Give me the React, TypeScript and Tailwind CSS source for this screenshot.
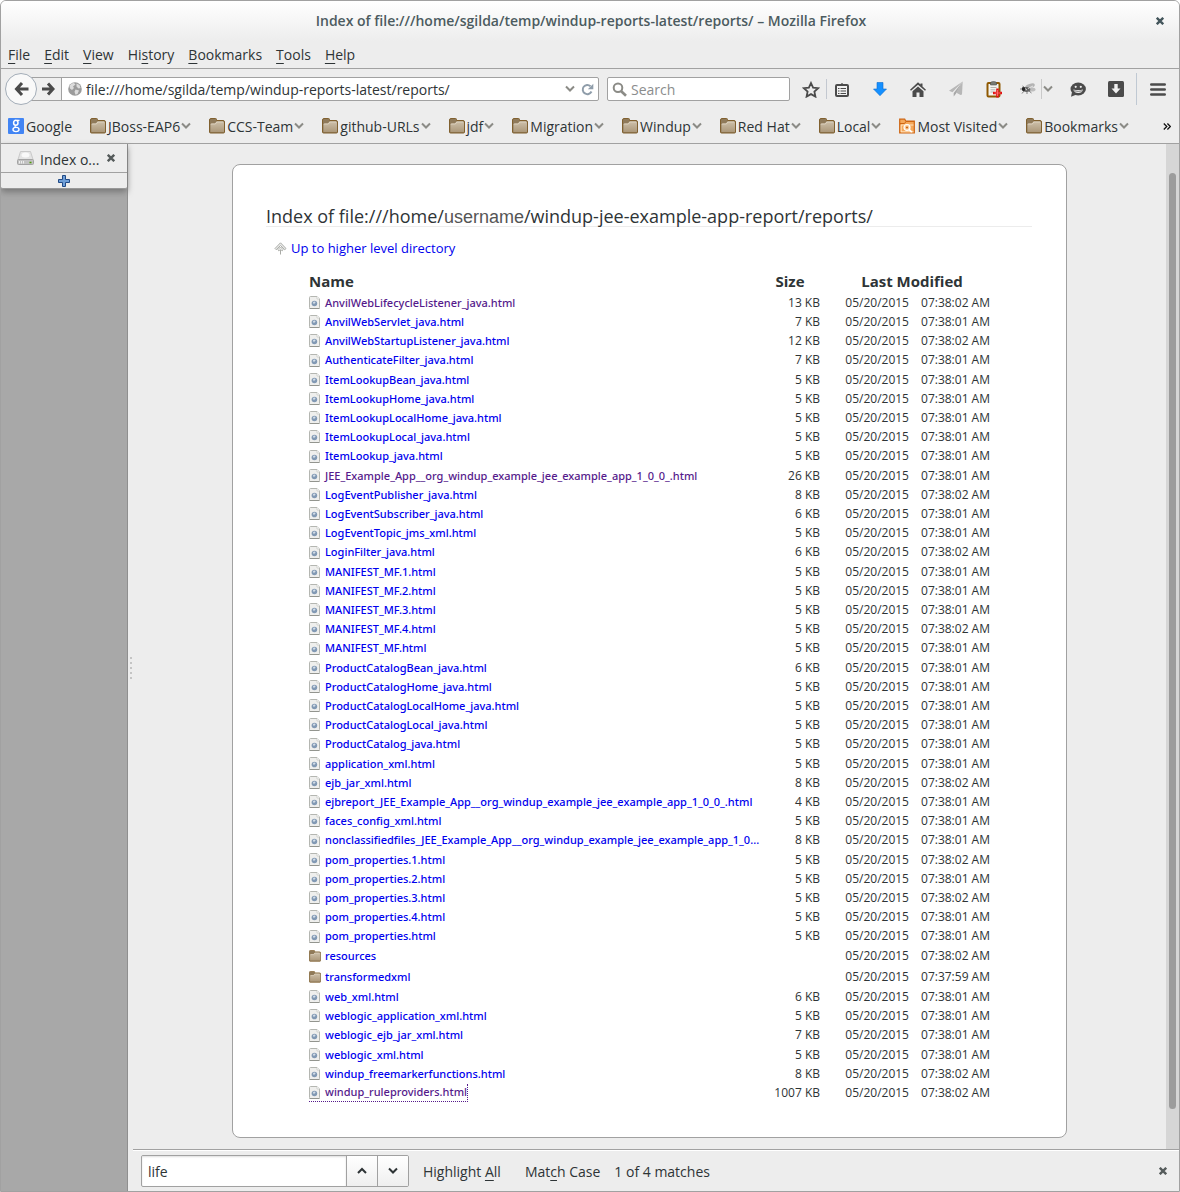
import type { ReactNode } from "react";

type Entry = { name: string; size?: string; time: string; visited?: boolean; focused?: boolean };

const row = (name: string, size: string, sec: string, extra: Partial<Entry> = {}): Entry => ({
  name,
  size: size ? `${size} KB` : undefined,
  time: `07:38:${sec} AM`,
  ...extra,
});

const entries: Entry[] = [
  row("AnvilWebLifecycleListener_java.html", "13", "02", { visited: true }),
  row("AnvilWebServlet_java.html", "7", "01"),
  row("AnvilWebStartupListener_java.html", "12", "02"),
  row("AuthenticateFilter_java.html", "7", "01"),
  row("ItemLookupBean_java.html", "5", "01"),
  row("ItemLookupHome_java.html", "5", "01"),
  row("ItemLookupLocalHome_java.html", "5", "01"),
  row("ItemLookupLocal_java.html", "5", "01"),
  row("ItemLookup_java.html", "5", "01"),
  row("JEE_Example_App__org_windup_example_jee_example_app_1_0_0_.html", "26", "01", { visited: true }),
  row("LogEventPublisher_java.html", "8", "02"),
  row("LogEventSubscriber_java.html", "6", "01"),
  row("LogEventTopic_jms_xml.html", "5", "01"),
  row("LoginFilter_java.html", "6", "02"),
  row("MANIFEST_MF.1.html", "5", "01"),
  row("MANIFEST_MF.2.html", "5", "01"),
  row("MANIFEST_MF.3.html", "5", "01"),
  row("MANIFEST_MF.4.html", "5", "02"),
  row("MANIFEST_MF.html", "5", "01"),
  row("ProductCatalogBean_java.html", "6", "01"),
  row("ProductCatalogHome_java.html", "5", "01"),
  row("ProductCatalogLocalHome_java.html", "5", "01"),
  row("ProductCatalogLocal_java.html", "5", "01"),
  row("ProductCatalog_java.html", "5", "01"),
  row("application_xml.html", "5", "01"),
  row("ejb_jar_xml.html", "8", "02"),
  row("ejbreport_JEE_Example_App__org_windup_example_jee_example_app_1_0_0_.html", "4", "01"),
  row("faces_config_xml.html", "5", "01"),
  row("nonclassifiedfiles_JEE_Example_App__org_windup_example_jee_example_app_1_0...", "8", "01"),
  row("pom_properties.1.html", "5", "02"),
  row("pom_properties.2.html", "5", "01"),
  row("pom_properties.3.html", "5", "02"),
  row("pom_properties.4.html", "5", "01"),
  row("pom_properties.html", "5", "01"),
  row("resources", "", "02"),
  row("transformedxml", "", "", { time: "07:37:59 AM" }),
  row("web_xml.html", "6", "01"),
  row("weblogic_application_xml.html", "5", "01"),
  row("weblogic_ejb_jar_xml.html", "7", "01"),
  row("weblogic_xml.html", "5", "01"),
  row("windup_freemarkerfunctions.html", "8", "02"),
  row("windup_ruleproviders.html", "1007", "02", { visited: true, focused: true }),
];

const menus: [string, string, string][] = [
  ["", "F", "ile"],
  ["", "E", "dit"],
  ["", "V", "iew"],
  ["Hi", "s", "tory"],
  ["", "B", "ookmarks"],
  ["", "T", "ools"],
  ["", "H", "elp"],
];

const bookmarks = ["JBoss-EAP6", "CCS-Team", "github-URLs", "jdf", "Migration", "Windup", "Red Hat", "Local", "Most Visited", "Bookmarks"];

const Key = ({ children }: { children: ReactNode }) => <span className="underline underline-offset-3">{children}</span>;

const Chevron = ({ up = false, dark = false }: { up?: boolean; dark?: boolean }) => (
  <svg width="10" height="8" viewBox="0 0 10 8" className="shrink-0" fill="none" stroke={dark ? "#2e3436" : "#8b8b86"} strokeWidth="2">
    <path d={up ? "M1 6l4-4 4 4" : "M1 1.5l4 4 4-4"} />
  </svg>
);

const Cross = ({ color = "#555b5b" }: { color?: string }) => (
  <svg width="8" height="8" viewBox="0 0 8 8" stroke={color} strokeWidth="2.4">
    <path d="M.8.8l6.4 6.4M7.2.8L.8 7.2" />
  </svg>
);

const Folder = ({ size = 16 }: { size?: number }) => (
  <svg width={size} height={size} viewBox="0 0 16 16" className="shrink-0">
    <defs>
      <linearGradient id="folder" x2="0" y2="1">
        <stop offset="0" stopColor="#cdc0aa" />
        <stop offset="1" stopColor="#ac987a" />
      </linearGradient>
    </defs>
    <path d="M.5 14V2q0-1.5 1.500-1.500h4.500q1 0 1 1v1H14q1.500 0 1.500 1.500v10q0 1-1 1h-13q-1 0-1-1z" fill="#8f7a5a" stroke="#80602f" />
    <path d="M1.500 14V6.500q0-1 1-1H6l1.500-2H14q1 0 1 1V14z" fill="url(#folder)" />
    <path d="M2 6.500q0-.5.5-.5h3.800l1.500-2H14" fill="none" stroke="#e2d8c7" strokeWidth=".8" />
  </svg>
);

const SearchFolder = () => (
  <svg width="16" height="16" viewBox="0 0 16 16" className="shrink-0">
    <path d="M.7 15V1.200h5l1 1.800h8.600v12z" fill="#f5a85a" stroke="#ce6512" strokeWidth="1.200" />
    <path d="M1 5.500h4.500l1.500-2h8" fill="none" stroke="#ce6512" />
    <path d="M2 7h12.500M2 13.800h12.500M2.200 7v7" stroke="#ffe2bd" fill="none" />
    <circle cx="8" cy="9.500" r="3" fill="#f9cf9f" stroke="#fff" strokeWidth="1.200" />
    <circle cx="8" cy="9.500" r="1.100" fill="#ce6512" />
    <path d="M10.200 11.700l2.600 2.500" stroke="#fff" strokeWidth="1.600" />
  </svg>
);

const FileIcon = () => (
  <svg width="12" height="13" viewBox="0 0 12 13" className="shrink-0">
    <path d="M.5 1.500q0-1 1-1H8L10.500 3v8.500q0 1-1 1h-8q-1 0-1-1z" fill="#efefed" stroke="#b4b6b1" />
    <path d="M.5 12.500h10" stroke="#93958f" />
    <path d="M8 .5V3h2.500" fill="#fff" stroke="#c4c6c1" strokeWidth=".7" />
    <circle cx="5.400" cy="7.500" r="2.800" fill="#8299b4" />
    <path d="M4 6q1.500-1 2.600 0l-.8 1.600-1.500.2z" fill="#d5dfe9" />
  </svg>
);

const ToolButton = ({ label, children }: { label: string; children: ReactNode }) => (
  <button type="button" aria-label={label} className="flex h-6 w-[18px] shrink-0 items-center justify-center">
    {children}
  </button>
);

const BackArrow = () => (
  <svg width="15" height="16" viewBox="0 0 15 16" fill="none" stroke="#4a4a4a" strokeWidth="3">
    <path d="M8 2L2.500 8 8 14M3 8h11.500" />
  </svg>
);

const ForwardArrow = () => (
  <svg width="13" height="14" viewBox="0 0 13 14" fill="none" stroke="#4a4a4a" strokeWidth="3">
    <path d="M6 1.500L11 7l-5 5.500M10.500 7H0" />
  </svg>
);

function TitleBar() {
  return (
    <header className="grid h-10 shrink-0 grid-cols-[40px_1fr_38px] items-center bg-linear-to-b from-white to-[#ededed]">
      <h1 className="col-start-2 text-center text-sm font-semibold text-[#4c5b60]">
        Index of file:///home/sgilda/temp/windup-reports-latest/reports/ – Mozilla Firefox
      </h1>
      <button type="button" aria-label="Close window" className="flex h-6 items-center justify-center">
        <Cross color="#44565c" />
      </button>
    </header>
  );
}

function Toolbar() {
  return (
    <div className="flex h-10 shrink-0 items-center pr-3 pl-1">
      <button type="button" aria-label="Back" className="z-10 flex size-8 shrink-0 items-center justify-center rounded-full border border-[#a3adb8] bg-[#f9f9f9]">
        <BackArrow />
      </button>
      <div className="-ml-2 flex h-6 flex-1 items-center rounded-r-xs border border-[#a1a1a1] bg-white">
        <button type="button" aria-label="Forward" className="flex h-full w-8 shrink-0 items-center justify-center border-r border-[#a1a1a1] bg-[#efefef] pl-1.5">
          <ForwardArrow />
        </button>
        <svg width="14" height="14" viewBox="0 0 14 14" className="ml-1.5 shrink-0">
          <circle cx="7" cy="7" r="6.800" fill="#9b9b9b" />
          <path d="M1.500 4Q3 1 6 1l1.500 1.500L5 4.500 6 6 4 8 2 6.500zM8.500 1.500l3 1.500 1 3-2 .5-2-2zM7.500 7.500l3.500 1-1.500 3.500-2 .8-1-3z" fill="#dcdcdc" />
        </svg>
        <input
          aria-label="Address"
          defaultValue="file:///home/sgilda/temp/windup-reports-latest/reports/"
          className="ml-1 h-full min-w-0 flex-1 bg-transparent pt-px text-sm text-[#2e3436] outline-none"
        />
        <button type="button" aria-label="Show history" className="px-1.5">
          <Chevron />
        </button>
        <button type="button" aria-label="Reload" className="mr-1">
          <svg width="13" height="13" viewBox="0 0 13 13" fill="none" stroke="#8f9daa" strokeWidth="2">
            <path d="M10.500 8.500A4.600 4.600 0 1 1 9.500 3.200" />
            <path d="M12.300.8v5.400H6.800z" fill="#8f9daa" stroke="none" />
          </svg>
        </button>
      </div>
      <div className="ml-2 flex h-6 w-[183px] shrink-0 items-center gap-1 rounded-xs border border-[#a1a1a1] bg-white pl-1">
        <svg width="15" height="15" viewBox="0 0 15 15" fill="none" stroke="#8b8b86" strokeWidth="2" className="shrink-0">
          <circle cx="6" cy="5.800" r="4.300" />
          <path d="M9 9l5 4.800" strokeWidth="2.600" />
        </svg>
        <input aria-label="Search" placeholder="Search" className="min-w-0 flex-1 bg-transparent pt-px text-sm outline-none placeholder:text-[#8b8d8d]" />
      </div>
      <div className="ml-3 flex items-center gap-5">
        <div className="flex items-center">
          <ToolButton label="Bookmark this page">
            <svg width="18" height="17" viewBox="0 0 18 17" fill="none" stroke="#4b4b4b" strokeWidth="1.800">
              <path d="M9 2l2.100 4.600 5 .6-3.700 3.400 1 5L9 13.100l-4.400 2.500 1-5L1.900 7.200l5-.6z" />
            </svg>
          </ToolButton>
          <span className="mx-1.5 h-5 w-px bg-[#c3c8d0]" />
          <ToolButton label="Show bookmarks">
            <svg width="14" height="15" viewBox="0 0 14 15">
              <rect x="1" y="3" width="12" height="11" rx="1" fill="#f1f1f1" stroke="#4b4b4b" strokeWidth="2" />
              <path d="M4 4V2h2q1-2 2 0h2v2z" fill="#4b4b4b" />
              <path d="M3 6.500h1.500M5.500 6.500H11M3 9h1.500M5.500 9H11M3 11.500h1.500M5.500 11.500H11" stroke="#4b4b4b" strokeWidth="1.200" />
            </svg>
          </ToolButton>
        </div>
        <ToolButton label="Downloads">
          <svg width="14" height="14" viewBox="0 0 14 14">
            <path d="M4 .5h6V7h3.500L7 13.700.5 7H4z" fill="#1590ff" stroke="#0a6dd0" strokeWidth=".6" />
          </svg>
        </ToolButton>
        <ToolButton label="Home">
          <svg width="16" height="15" viewBox="0 0 16 15" fill="#4b4b4b">
            <path d="M8 .3l2.500 2.300V1.500h2v3L16 7.800l-1 1L8 2.700 1 8.800l-1-1z" />
            <path d="M2.500 9.200L8 4.400l5.500 4.800V15H9.500v-4.500h-3V15h-4z" />
          </svg>
        </ToolButton>
        <ToolButton label="Share this page">
          <svg width="14" height="16" viewBox="0 0 14 16" fill="#b7b7b7">
            <path d="M13.700.5L0 9.800l3.500 1.500z" />
            <path d="M13.700.5L4.700 12v3.500l2.200-2.800z" fill="#a8a8a8" />
            <path d="M13.700.5L7 11.600l4.500 2.400 1.500-.5z" />
          </svg>
        </ToolButton>
        <ToolButton label="Add from clipboard">
          <svg width="16" height="17" viewBox="0 0 16 17">
            <rect x="1.500" y="2" width="12" height="13.500" rx="1" fill="#f4f4f0" stroke="#8f5902" strokeWidth="2" />
            <path d="M4.500 4V2q0-1.500 3-1.500t3 1.500v2z" fill="#777b75" stroke="#4b4d4a" strokeWidth=".6" />
            <path d="M4.500 6.500h6M4.500 8.800h5M4.500 11h3" stroke="#b5b7b2" />
            <path d="M11.500 7.500v9M7 12h9" stroke="#e01010" strokeWidth="2.600" />
            <path d="M11.500 9v6M8.500 12h6" stroke="#ff7b7b" strokeWidth=".8" />
          </svg>
        </ToolButton>
        <div className="-mx-1 flex items-center">
          <ToolButton label="Debugger">
            <svg width="16" height="14" viewBox="0 0 16 14">
              <ellipse cx="10" cy="4" rx="5" ry="2.200" fill="#b4b4b4" transform="rotate(-18 10 4)" />
              <ellipse cx="11.500" cy="7.500" rx="4" ry="2" fill="#bdbdbd" />
              <ellipse cx="6.500" cy="7.500" rx="3.800" ry="2.400" fill="#666" />
              <circle cx="3.500" cy="7" r="1.900" fill="#262626" />
              <path d="M4 9l-2 2.500M7 9.500v2.500M9 9l2.500 2M4 5L2.500 4M1.500 7H0" stroke="#666" strokeWidth=".8" />
              <path d="M8 6.500l5-2.500M5 6.500l2 1.500" stroke="#f3f3f3" strokeWidth=".8" />
            </svg>
          </ToolButton>
          <span className="ml-1 h-5 w-px bg-[#c9c9c9]" />
          <button type="button" aria-label="Debugger options" className="ml-px">
            <Chevron />
          </button>
        </div>
        <ToolButton label="Chat">
          <svg width="16" height="15" viewBox="0 0 16 15">
            <ellipse cx="8.200" cy="7" rx="7.700" ry="6.500" fill="#4b4b4b" />
            <path d="M2 10l-1 4.800 5-2z" fill="#4b4b4b" />
            <circle cx="5.700" cy="4.800" r="1.100" fill="#eee" />
            <circle cx="10.800" cy="4.800" r="1.100" fill="#eee" />
            <path d="M3.300 7.500q4.900 1 9.800 0-1 3.600-4.900 3.600t-4.900-3.600z" fill="#eee" />
            <path d="M4 8.800q4.200 1.200 8.400 0" stroke="#4b4b4b" strokeWidth=".7" fill="none" />
          </svg>
        </ToolButton>
        <ToolButton label="Save">
          <svg width="16" height="16" viewBox="0 0 16 16" className="shrink-0">
            <rect width="16" height="16" rx="1.500" fill="#4b4b4b" />
            <path d="M6.300 3h3.400v4.500h2.800L8 12.500 3.500 7.500h2.800z" fill="#f1f1f1" />
          </svg>
        </ToolButton>
      </div>
      <span className="mr-3 ml-[11px] h-8 w-px bg-[#c0c9d3]" />
      <ToolButton label="Open menu">
        <svg width="16" height="13" viewBox="0 0 16 13" stroke="#4b4b4b" strokeWidth="2.600" strokeLinecap="round">
          <path d="M1.300 1.500h13.400M1.300 6.500h13.400M1.300 11.500h13.400" />
        </svg>
      </ToolButton>
    </div>
  );
}

function BookmarkBar() {
  return (
    <nav aria-label="Bookmarks" className="flex h-[35px] shrink-0 items-center border-b border-[#a1a1a1] pr-2 pl-[7px]">
      <div className="flex flex-1 items-center justify-between">
        <a href="#google" className="flex items-center gap-0.5">
          <svg width="16" height="16" viewBox="0 0 16 16">
            <rect width="16" height="16" rx="1" fill="#4285f4" />
            <ellipse cx="7.800" cy="4.800" rx="2.200" ry="2.500" fill="none" stroke="#fff" strokeWidth="1.500" />
            <path d="M9 2.400h2.500M8 7.300q-2 1.200 0 2" stroke="#fff" strokeWidth="1.200" fill="none" />
            <ellipse cx="8" cy="11.500" rx="3" ry="2.100" fill="none" stroke="#fff" strokeWidth="1.400" />
          </svg>
          <span className="pt-0.5">Google</span>
        </a>
        {bookmarks.map((b) => (
          <button key={b} type="button" className="flex items-center gap-px whitespace-nowrap">
            {b === "Most Visited" ? <SearchFolder /> : <Folder />}
            <span className="pt-0.5 pl-px">{b}</span>
            <Chevron />
          </button>
        ))}
      </div>
      <button type="button" aria-label="More bookmarks" className="ml-[34px]">
        <svg width="8" height="7" viewBox="0 0 8 7" fill="none" stroke="#111" strokeWidth="1.300">
          <path d="M.8.5l3 3-3 3M4.400.5l3 3-3 3" />
        </svg>
      </button>
    </nav>
  );
}

function TabSidebar() {
  return (
    <aside className="w-[127px] shrink-0 border-r border-[#8f8f8f] bg-[#a8a8a8]">
      <div className="rounded-b-xs border-b border-[#999] bg-[#ededed] shadow-[0_3px_6px_#777]">
        <div className="flex h-[29px] items-center border-b border-[#a1a1a1] pl-4">
          <svg width="17" height="14" viewBox="0 0 17 14" className="shrink-0">
            <path d="M3.500.5h10L16 8.500H1z" fill="#e4e4e4" stroke="#c9c9c9" />
            <ellipse cx="8.500" cy="4" rx="4" ry="2.500" fill="#f9f9f9" />
            <rect x=".5" y="8.500" width="16" height="5" rx="1" fill="#c2c2c2" stroke="#a3a3a3" />
            <path d="M2.500 10v2.500M4.500 10v2.500M6.500 10v2.500" stroke="#eee" />
            <path d="M12.500 11.500h2" stroke="#4e9a06" strokeWidth="1.500" />
          </svg>
          <span className="ml-1.5 pt-1">Index o...</span>
          <button type="button" aria-label="Close tab" className="ml-2">
            <Cross />
          </button>
        </div>
        <button type="button" aria-label="New tab" className="flex h-[15px] w-full items-center justify-center">
          <svg width="12" height="12" viewBox="0 0 12 12">
            <path d="M4.500.5h3v4h4v3h-4v4h-3v-4h-4v-3h4z" fill="#6f9fd8" stroke="#204a87" />
          </svg>
        </button>
      </div>
    </aside>
  );
}

function Listing() {
  return (
    <section className="mx-auto mt-5 mb-2.5 w-full max-w-[835px] rounded-lg border border-[#a1a1a1] bg-white px-[34px] pt-10 pb-[35px] text-[#2e3436]">
      <h2 className="-ml-px h-[22px] border-b border-[#ececec] text-lg leading-[22px] whitespace-nowrap">
        Index of file:///home/<span className="font-['Liberation_Sans',sans-serif] text-[#555]">username</span>/windup-jee-example-app-report/reports/
      </h2>
      <a href="#up" className="mt-[11px] ml-[7px] flex h-5 items-center gap-1 text-[13px] text-[#0000ee]">
        <svg width="13" height="13" viewBox="0 0 13 13" fill="none" stroke="#a9aba6">
          <path d="M6.500.8L1 6.500l1.200 1.200L6.500 3.500l4.300 4.200L12 6.500z" fill="#ececec" />
          <path d="M6.500 5L3.800 7.800l1 1 1.700-1.500 1.700 1.500 1-1zM6.500 8v4.500" />
        </svg>
        Up to higher level directory
      </a>
      <table className="mt-3 ml-[42px] w-[681px] table-fixed border-collapse text-xs">
        <colgroup>
          <col />
          <col className="w-[60px]" />
          <col className="w-[90px]" />
          <col className="w-20" />
        </colgroup>
        <thead>
          <tr className="h-[23px] text-[15px] leading-5">
            <th className="p-0 pb-0.5 text-left font-bold">Name</th>
            <th className="p-0 pb-0.5 font-bold">Size</th>
            <th className="p-0 pb-0.5 pl-3.5 font-bold" colSpan={2}>Last Modified</th>
          </tr>
        </thead>
        <tbody>
          {entries.map((e) => (
            <tr key={e.name} className={e.size ? "h-[19px] leading-[18px] nth-[5n+4]:h-5" : "h-5 leading-[18px] even:h-[21px]"}>
              <td className="p-0">
                <a
                  href={`#${e.name}`}
                  className={`inline-flex h-[18px] items-center gap-1 align-top font-['Noto_Sans',sans-serif] text-[11px] font-medium whitespace-nowrap ${e.visited ? "text-[#551a8b]" : "text-[#0000ee]"} ${e.focused ? "border-r border-b border-dotted border-[#551a8b]" : ""}`}
                >
                  {e.size ? <FileIcon /> : <Folder size={12} />}
                  {e.name}
                </a>
              </td>
              <td className="p-0 text-right whitespace-nowrap">{e.size}</td>
              <td className="p-0 pr-px text-right">05/20/2015</td>
              <td className="p-0 text-right whitespace-nowrap">{e.time}</td>
            </tr>
          ))}
        </tbody>
      </table>
    </section>
  );
}

function FindBar() {
  return (
    <form className="flex h-[42px] shrink-0 items-center border-t border-[#a1a1a1] pr-3 pl-2 shadow-[inset_0_1px_0_#fff]" onSubmit={(e) => e.preventDefault()}>
      <div className="flex h-8 items-stretch overflow-hidden rounded-xs border border-[#a1a1a1] bg-white">
        <input aria-label="Find in page" defaultValue="life" className="w-[204px] px-1.5 pt-0.5 text-sm shadow-[inset_0_1px_2px_#ddd] outline-none" />
        <button type="button" aria-label="Previous match" className="flex w-[31px] items-center justify-center border-l border-[#a1a1a1] bg-linear-to-b from-white to-[#efefef]">
          <Chevron up dark />
        </button>
        <button type="button" aria-label="Next match" className="flex w-[31px] items-center justify-center border-l border-[#a1a1a1] bg-linear-to-b from-white to-[#efefef]">
          <Chevron dark />
        </button>
      </div>
      <button type="button" className="ml-3.5 pt-0.5">
        Highlight <Key>A</Key>ll
      </button>
      <button type="button" className="ml-6 pt-0.5">
        Mat<Key>c</Key>h Case
      </button>
      <span className="ml-3.5 pt-0.5">1 of 4 matches</span>
      <button type="button" aria-label="Close find bar" className="ml-auto">
        <Cross />
      </button>
    </form>
  );
}

export default function App() {
  return (
    <div className="flex min-h-screen flex-col overflow-hidden rounded-t-md border border-[#a1a1a1] bg-[#ededed] font-['Open_Sans',sans-serif] text-sm leading-5 text-[#2e3436]">
      <TitleBar />
      <div role="menubar" className="flex h-7 shrink-0 items-center gap-3.5 border-b border-[#a1a1a1] pl-[7px]">
        {menus.map(([a, k, b]) => (
          <button key={a + k + b} type="button" role="menuitem">
            {a}
            <Key>{k}</Key>
            {b}
          </button>
        ))}
      </div>
      <Toolbar />
      <BookmarkBar />
      <div className="flex flex-1">
        <TabSidebar />
        <div className="flex w-[5px] shrink-0 flex-col items-center justify-center gap-[3px]">
          {[0, 1, 2, 3, 4].map((i) => (
            <span key={i} className="size-0.5 bg-[#c4c4c4]" />
          ))}
        </div>
        <div className="flex min-w-0 flex-1 flex-col">
          <div className="flex flex-1">
            <main className="min-w-0 flex-1">
              <Listing />
            </main>
            <div className="flex w-[13px] shrink-0 flex-col bg-[#d6d6d6] px-[3px] pt-[29px] pb-10">
              <div className="flex-1 rounded-full bg-[#9c9c9c]" />
            </div>
          </div>
          <FindBar />
        </div>
      </div>
    </div>
  );
}
